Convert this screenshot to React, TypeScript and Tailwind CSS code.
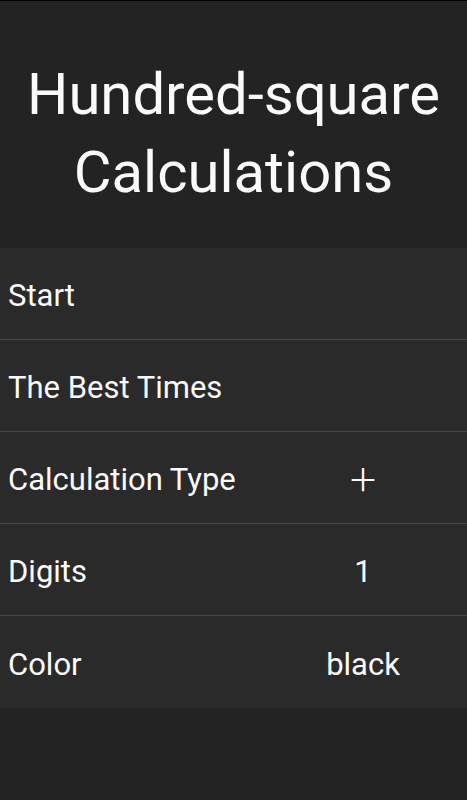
import React from "react";

const rows: { label: string; value?: string; cjk?: boolean }[] = [
  { label: "Start" },
  { label: "The Best Times" },
  { label: "Calculation Type", value: "＋", cjk: true },
  { label: "Digits", value: "1" },
  { label: "Color", value: "black" },
];

export default function App() {
  return (
    <div
      className="min-h-[800px] w-full bg-[#232323] text-[#fafafa] border-t border-black"
      style={{ fontFamily: "Roboto, 'Noto Sans', sans-serif" }}
    >
      <div className="h-[247px] pt-[54px] text-center text-[58px] leading-[78px]">
        <div>Hundred-square</div>
        <div>Calculations</div>
      </div>
      <div className="flex flex-col bg-[#2a2a2a]">
        {rows.map((r, i) => (
          <div
            key={r.label}
            className={
              "flex h-[92px] items-center pl-2 pt-[6px] text-[31px] " +
              (i < rows.length - 1 ? "border-b border-[#454545]" : "")
            }
          >
            <div className="flex-1">{r.label}</div>
            {r.value !== undefined && (
              <div
                className={
                  "w-[208px] text-center " +
                  (r.cjk ? "font-['Noto_Sans_CJK_JP',sans-serif] -mt-[4px]" : "")
                }
              >
                {r.value}
              </div>
            )}
          </div>
        ))}
      </div>
    </div>
  );
}
